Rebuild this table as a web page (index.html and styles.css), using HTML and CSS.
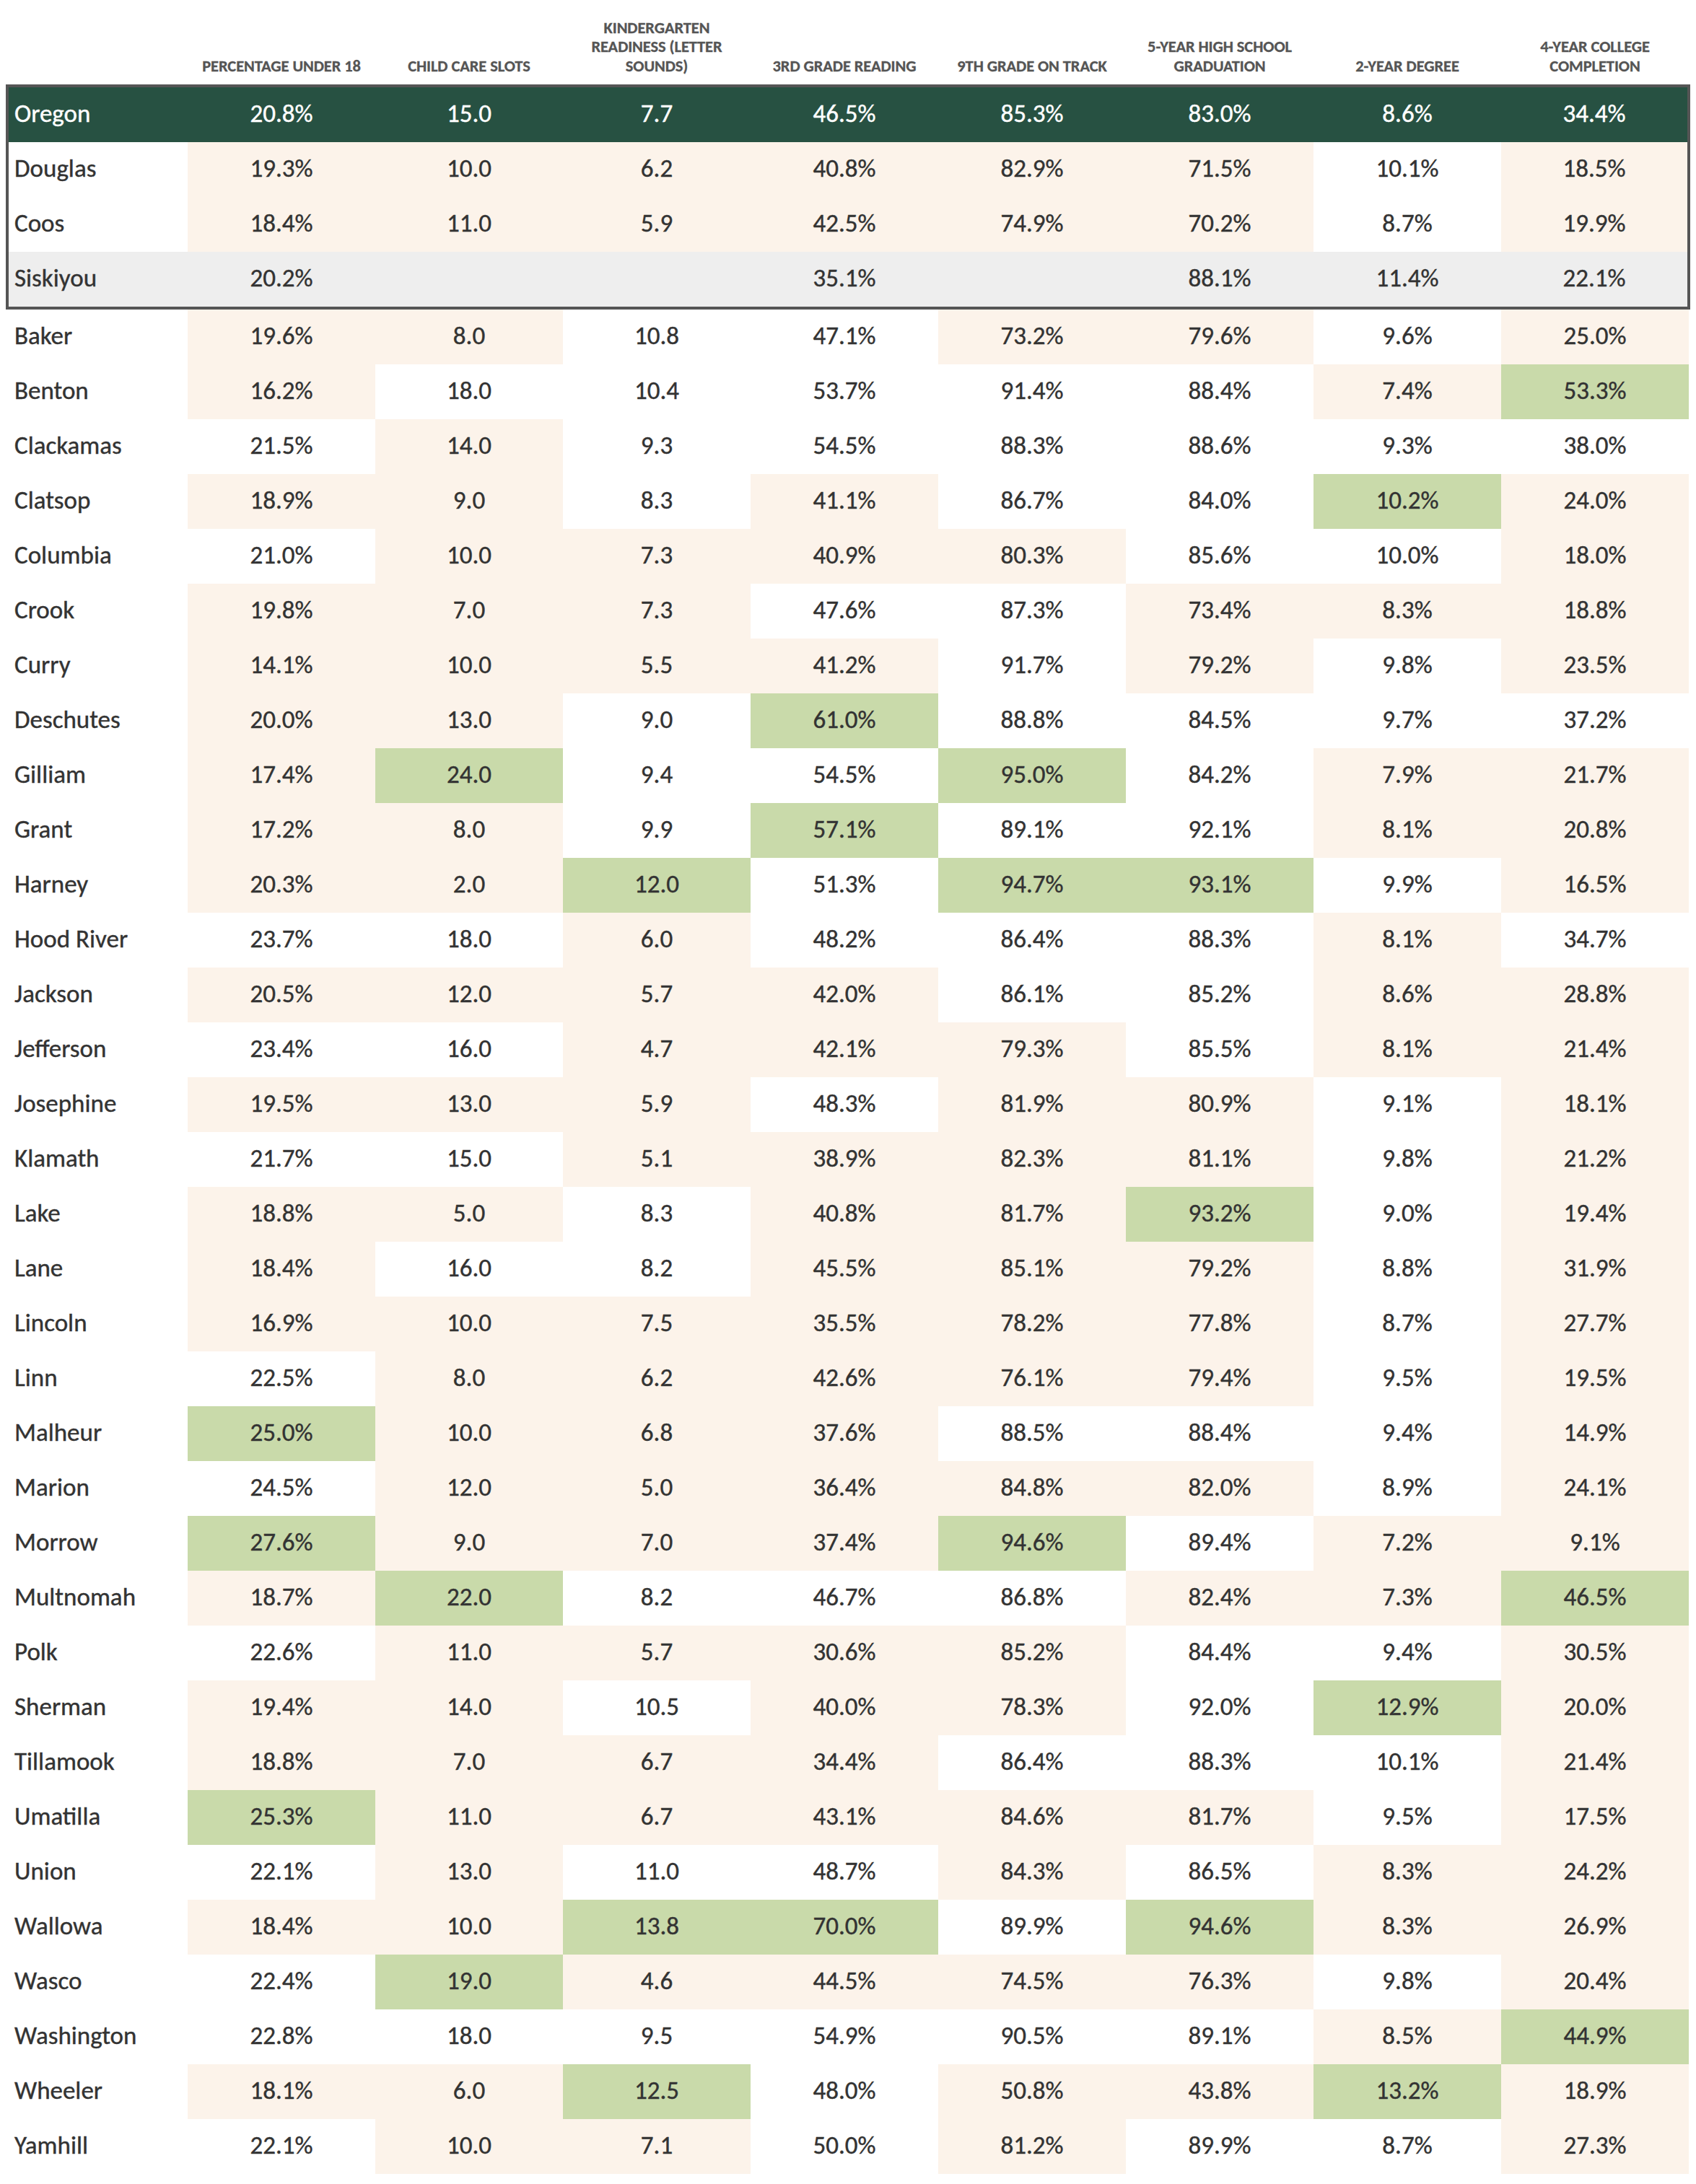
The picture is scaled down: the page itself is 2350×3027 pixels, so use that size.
FILE: index.html
```html
<!DOCTYPE html>
<html lang="en">
<head>
<meta charset="utf-8">
<title>Oregon County Indicators</title>
<link rel="stylesheet" href="styles.css">
</head>
<body>
<div class="sheet">
  <div class="row head">
    <div class="hc"></div>
    <div class="hc">PERCENTAGE UNDER 18</div>
    <div class="hc">CHILD CARE SLOTS</div>
    <div class="hc">KINDERGARTEN<br>READINESS (LETTER<br>SOUNDS)</div>
    <div class="hc">3RD GRADE READING</div>
    <div class="hc">9TH GRADE ON TRACK</div>
    <div class="hc">5-YEAR HIGH SCHOOL<br>GRADUATION</div>
    <div class="hc">2-YEAR DEGREE</div>
    <div class="hc">4-YEAR COLLEGE<br>COMPLETION</div>
  </div>

  <div class="box">
    <div class="row state">
      <div class="name">Oregon</div><div class="c">20.8%</div><div class="c">15.0</div><div class="c">7.7</div><div class="c">46.5%</div><div class="c">85.3%</div><div class="c">83.0%</div><div class="c">8.6%</div><div class="c">34.4%</div>
    </div>
    <div class="row">
      <div class="name">Douglas</div><div class="c b">19.3%</div><div class="c b">10.0</div><div class="c b">6.2</div><div class="c b">40.8%</div><div class="c b">82.9%</div><div class="c b">71.5%</div><div class="c">10.1%</div><div class="c b">18.5%</div>
    </div>
    <div class="row">
      <div class="name">Coos</div><div class="c b">18.4%</div><div class="c b">11.0</div><div class="c b">5.9</div><div class="c b">42.5%</div><div class="c b">74.9%</div><div class="c b">70.2%</div><div class="c">8.7%</div><div class="c b">19.9%</div>
    </div>
    <div class="row gray">
      <div class="name">Siskiyou</div><div class="c">20.2%</div><div class="c"></div><div class="c"></div><div class="c">35.1%</div><div class="c"></div><div class="c">88.1%</div><div class="c">11.4%</div><div class="c">22.1%</div>
    </div>
  </div>

  <div class="rows">
    <div class="row"><div class="name">Baker</div><div class="c b">19.6%</div><div class="c b">8.0</div><div class="c">10.8</div><div class="c">47.1%</div><div class="c b">73.2%</div><div class="c b">79.6%</div><div class="c">9.6%</div><div class="c b">25.0%</div></div>
    <div class="row"><div class="name">Benton</div><div class="c b">16.2%</div><div class="c">18.0</div><div class="c">10.4</div><div class="c">53.7%</div><div class="c">91.4%</div><div class="c">88.4%</div><div class="c b">7.4%</div><div class="c g">53.3%</div></div>
    <div class="row"><div class="name">Clackamas</div><div class="c">21.5%</div><div class="c b">14.0</div><div class="c">9.3</div><div class="c">54.5%</div><div class="c">88.3%</div><div class="c">88.6%</div><div class="c">9.3%</div><div class="c">38.0%</div></div>
    <div class="row"><div class="name">Clatsop</div><div class="c b">18.9%</div><div class="c b">9.0</div><div class="c">8.3</div><div class="c b">41.1%</div><div class="c">86.7%</div><div class="c">84.0%</div><div class="c g">10.2%</div><div class="c b">24.0%</div></div>
    <div class="row"><div class="name">Columbia</div><div class="c">21.0%</div><div class="c b">10.0</div><div class="c b">7.3</div><div class="c b">40.9%</div><div class="c b">80.3%</div><div class="c">85.6%</div><div class="c">10.0%</div><div class="c b">18.0%</div></div>
    <div class="row"><div class="name">Crook</div><div class="c b">19.8%</div><div class="c b">7.0</div><div class="c b">7.3</div><div class="c">47.6%</div><div class="c">87.3%</div><div class="c b">73.4%</div><div class="c b">8.3%</div><div class="c b">18.8%</div></div>
    <div class="row"><div class="name">Curry</div><div class="c b">14.1%</div><div class="c b">10.0</div><div class="c b">5.5</div><div class="c b">41.2%</div><div class="c">91.7%</div><div class="c b">79.2%</div><div class="c">9.8%</div><div class="c b">23.5%</div></div>
    <div class="row"><div class="name">Deschutes</div><div class="c b">20.0%</div><div class="c b">13.0</div><div class="c">9.0</div><div class="c g">61.0%</div><div class="c">88.8%</div><div class="c">84.5%</div><div class="c">9.7%</div><div class="c">37.2%</div></div>
    <div class="row"><div class="name">Gilliam</div><div class="c b">17.4%</div><div class="c g">24.0</div><div class="c">9.4</div><div class="c">54.5%</div><div class="c g">95.0%</div><div class="c">84.2%</div><div class="c b">7.9%</div><div class="c b">21.7%</div></div>
    <div class="row"><div class="name">Grant</div><div class="c b">17.2%</div><div class="c b">8.0</div><div class="c">9.9</div><div class="c g">57.1%</div><div class="c">89.1%</div><div class="c">92.1%</div><div class="c b">8.1%</div><div class="c b">20.8%</div></div>
    <div class="row"><div class="name">Harney</div><div class="c b">20.3%</div><div class="c b">2.0</div><div class="c g">12.0</div><div class="c">51.3%</div><div class="c g">94.7%</div><div class="c g">93.1%</div><div class="c">9.9%</div><div class="c b">16.5%</div></div>
    <div class="row"><div class="name">Hood River</div><div class="c">23.7%</div><div class="c">18.0</div><div class="c b">6.0</div><div class="c">48.2%</div><div class="c">86.4%</div><div class="c">88.3%</div><div class="c b">8.1%</div><div class="c">34.7%</div></div>
    <div class="row"><div class="name">Jackson</div><div class="c b">20.5%</div><div class="c b">12.0</div><div class="c b">5.7</div><div class="c b">42.0%</div><div class="c">86.1%</div><div class="c">85.2%</div><div class="c b">8.6%</div><div class="c b">28.8%</div></div>
    <div class="row"><div class="name">Jefferson</div><div class="c">23.4%</div><div class="c">16.0</div><div class="c b">4.7</div><div class="c b">42.1%</div><div class="c b">79.3%</div><div class="c">85.5%</div><div class="c b">8.1%</div><div class="c b">21.4%</div></div>
    <div class="row"><div class="name">Josephine</div><div class="c b">19.5%</div><div class="c b">13.0</div><div class="c b">5.9</div><div class="c">48.3%</div><div class="c b">81.9%</div><div class="c b">80.9%</div><div class="c">9.1%</div><div class="c b">18.1%</div></div>
    <div class="row"><div class="name">Klamath</div><div class="c">21.7%</div><div class="c">15.0</div><div class="c b">5.1</div><div class="c b">38.9%</div><div class="c b">82.3%</div><div class="c b">81.1%</div><div class="c">9.8%</div><div class="c b">21.2%</div></div>
    <div class="row"><div class="name">Lake</div><div class="c b">18.8%</div><div class="c b">5.0</div><div class="c">8.3</div><div class="c b">40.8%</div><div class="c b">81.7%</div><div class="c g">93.2%</div><div class="c">9.0%</div><div class="c b">19.4%</div></div>
    <div class="row"><div class="name">Lane</div><div class="c b">18.4%</div><div class="c">16.0</div><div class="c">8.2</div><div class="c b">45.5%</div><div class="c b">85.1%</div><div class="c b">79.2%</div><div class="c">8.8%</div><div class="c b">31.9%</div></div>
    <div class="row"><div class="name">Lincoln</div><div class="c b">16.9%</div><div class="c b">10.0</div><div class="c b">7.5</div><div class="c b">35.5%</div><div class="c b">78.2%</div><div class="c b">77.8%</div><div class="c">8.7%</div><div class="c b">27.7%</div></div>
    <div class="row"><div class="name">Linn</div><div class="c">22.5%</div><div class="c b">8.0</div><div class="c b">6.2</div><div class="c b">42.6%</div><div class="c b">76.1%</div><div class="c b">79.4%</div><div class="c">9.5%</div><div class="c b">19.5%</div></div>
    <div class="row"><div class="name">Malheur</div><div class="c g">25.0%</div><div class="c b">10.0</div><div class="c b">6.8</div><div class="c b">37.6%</div><div class="c">88.5%</div><div class="c">88.4%</div><div class="c">9.4%</div><div class="c b">14.9%</div></div>
    <div class="row"><div class="name">Marion</div><div class="c">24.5%</div><div class="c b">12.0</div><div class="c b">5.0</div><div class="c b">36.4%</div><div class="c b">84.8%</div><div class="c b">82.0%</div><div class="c">8.9%</div><div class="c b">24.1%</div></div>
    <div class="row"><div class="name">Morrow</div><div class="c g">27.6%</div><div class="c b">9.0</div><div class="c b">7.0</div><div class="c b">37.4%</div><div class="c g">94.6%</div><div class="c">89.4%</div><div class="c b">7.2%</div><div class="c b">9.1%</div></div>
    <div class="row"><div class="name">Multnomah</div><div class="c b">18.7%</div><div class="c g">22.0</div><div class="c">8.2</div><div class="c">46.7%</div><div class="c">86.8%</div><div class="c b">82.4%</div><div class="c b">7.3%</div><div class="c g">46.5%</div></div>
    <div class="row"><div class="name">Polk</div><div class="c">22.6%</div><div class="c b">11.0</div><div class="c b">5.7</div><div class="c b">30.6%</div><div class="c b">85.2%</div><div class="c">84.4%</div><div class="c">9.4%</div><div class="c b">30.5%</div></div>
    <div class="row"><div class="name">Sherman</div><div class="c b">19.4%</div><div class="c b">14.0</div><div class="c">10.5</div><div class="c b">40.0%</div><div class="c b">78.3%</div><div class="c">92.0%</div><div class="c g">12.9%</div><div class="c b">20.0%</div></div>
    <div class="row"><div class="name">Tillamook</div><div class="c b">18.8%</div><div class="c b">7.0</div><div class="c b">6.7</div><div class="c b">34.4%</div><div class="c">86.4%</div><div class="c">88.3%</div><div class="c">10.1%</div><div class="c b">21.4%</div></div>
    <div class="row"><div class="name">Umatilla</div><div class="c g">25.3%</div><div class="c b">11.0</div><div class="c b">6.7</div><div class="c b">43.1%</div><div class="c b">84.6%</div><div class="c b">81.7%</div><div class="c">9.5%</div><div class="c b">17.5%</div></div>
    <div class="row"><div class="name">Union</div><div class="c">22.1%</div><div class="c b">13.0</div><div class="c">11.0</div><div class="c">48.7%</div><div class="c b">84.3%</div><div class="c">86.5%</div><div class="c b">8.3%</div><div class="c b">24.2%</div></div>
    <div class="row"><div class="name">Wallowa</div><div class="c b">18.4%</div><div class="c b">10.0</div><div class="c g">13.8</div><div class="c g">70.0%</div><div class="c">89.9%</div><div class="c g">94.6%</div><div class="c b">8.3%</div><div class="c b">26.9%</div></div>
    <div class="row"><div class="name">Wasco</div><div class="c">22.4%</div><div class="c g">19.0</div><div class="c b">4.6</div><div class="c b">44.5%</div><div class="c b">74.5%</div><div class="c b">76.3%</div><div class="c">9.8%</div><div class="c b">20.4%</div></div>
    <div class="row"><div class="name">Washington</div><div class="c">22.8%</div><div class="c">18.0</div><div class="c">9.5</div><div class="c">54.9%</div><div class="c">90.5%</div><div class="c">89.1%</div><div class="c b">8.5%</div><div class="c g">44.9%</div></div>
    <div class="row"><div class="name">Wheeler</div><div class="c b">18.1%</div><div class="c b">6.0</div><div class="c g">12.5</div><div class="c">48.0%</div><div class="c b">50.8%</div><div class="c b">43.8%</div><div class="c g">13.2%</div><div class="c b">18.9%</div></div>
    <div class="row"><div class="name">Yamhill</div><div class="c">22.1%</div><div class="c b">10.0</div><div class="c b">7.1</div><div class="c">50.0%</div><div class="c b">81.2%</div><div class="c">89.9%</div><div class="c">8.7%</div><div class="c b">27.3%</div></div>
  </div>
</div>
</body>
</html>
```

FILE: styles.css
```css
html, body {
  margin: 0;
  padding: 0;
  background: #ffffff;
}

body {
  font-family: Carlito, Calibri, "Open Sans", "Noto Sans", sans-serif;
  color: #333333;
}

.sheet {
  display: flex;
  flex-direction: column;
  align-items: flex-start;
}

.row {
  display: grid;
  grid-template-columns: 248px repeat(8, 260px);
  height: 76px;
  font-size: 35px;
  -webkit-text-stroke: 0.4px currentColor;
}

.head {
  height: 117px;
  margin-left: 12px;
  -webkit-text-stroke: 0.3px currentColor;
}

.hc {
  display: flex;
  align-items: flex-end;
  justify-content: center;
  text-align: center;
  padding-bottom: 11px;
  font-size: 22.5px;
  font-weight: bold;
  color: #555555;
  line-height: 26.8px;
  letter-spacing: -0.1px;
}

.box {
  margin-left: 8px;
  border: 4px solid #555555;
}

.box .row {
  grid-template-columns: 248px repeat(7, 260px) 258px;
}

.rows {
  margin-left: 12px;
}

.name,
.c {
  display: flex;
  align-items: center;
  white-space: nowrap;
  padding-bottom: 5px;
}

.name {
  justify-content: flex-start;
  padding-left: 8px;
}

.c {
  justify-content: center;
}

.b {
  background: #fcf3ea;
}

.g {
  background: #c9daaa;
}

.state {
  background: #275142;
  color: #ffffff;
}

.gray {
  background: #eeeeee;
}
```
